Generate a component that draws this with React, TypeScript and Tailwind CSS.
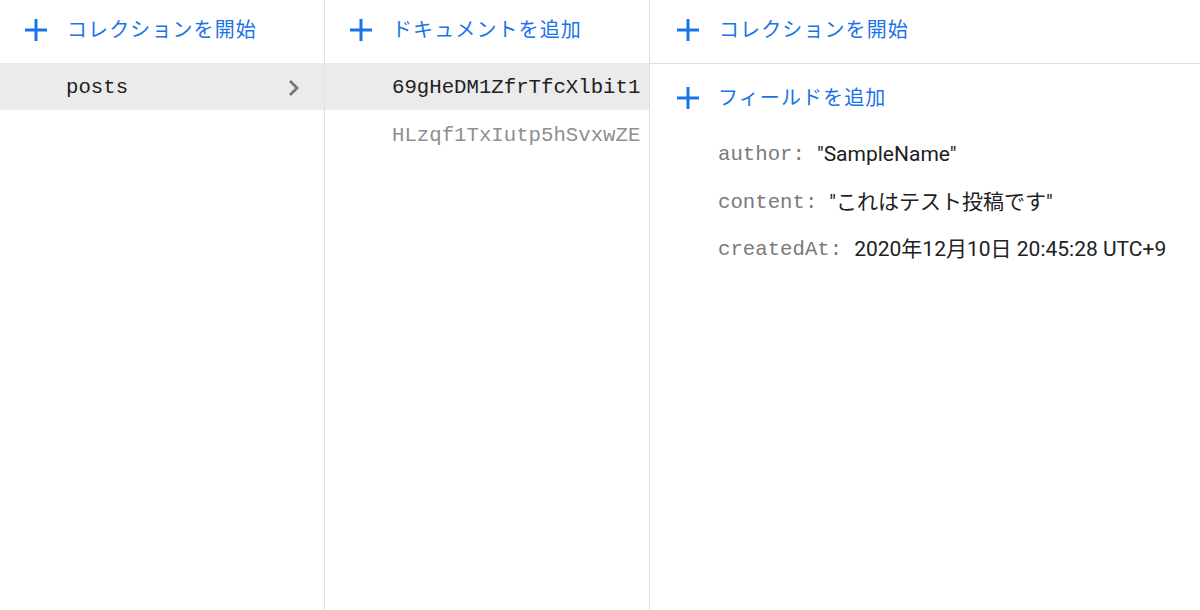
import React from "react";

const sans = { fontFamily: 'Roboto, "Noto Sans CJK JP", sans-serif' } as React.CSSProperties;
const mono = { fontFamily: '"Liberation Mono", "DejaVu Sans Mono", "Noto Sans CJK JP", monospace' } as React.CSSProperties;

function PlusIcon() {
  return (
    <svg width="22" height="22" viewBox="0 0 22 22" className="shrink-0">
      <path d="M9.5 0h3v22h-3z M0 9.5h22v3H0z" fill="#1a73e8" />
    </svg>
  );
}

function Chevron() {
  return (
    <svg width="12" height="18" viewBox="0 0 12 18">
      <path d="M2 2 L9 9 L2 16" fill="none" stroke="#757575" strokeWidth="2.8" />
    </svg>
  );
}

function AddButton({ label, pl }: { label: string; pl: string }) {
  return (
    <div className={`flex h-[59px] items-center ${pl}`}>
      <PlusIcon />
      <span
        className="ml-[20px] text-[20px] tracking-[1.1px] text-[#1a73e8]"
        style={sans}
      >
        {label}
      </span>
    </div>
  );
}

export default function App() {
  return (
    <div className="flex h-[610px] w-[1200px] overflow-hidden bg-white" style={sans}>
      {/* Column 1 */}
      <div className="flex w-[325px] shrink-0 flex-col border-r border-[#e0e0e0]">
        <div className="h-[63px]">
          <AddButton label="コレクションを開始" pl="pl-[25px]" />
        </div>
        <div className="flex h-[47px] items-center justify-between bg-[#ebebeb] pl-[66px] pr-[24px] pt-[2px]">
          <span className="text-[20.7px] text-[#212121]" style={mono}>
            posts
          </span>
          <Chevron />
        </div>
      </div>

      {/* Column 2 */}
      <div className="flex w-[325px] shrink-0 flex-col border-r border-[#e0e0e0]">
        <div className="h-[63px]">
          <AddButton label="ドキュメントを追加" pl="pl-[25px]" />
        </div>
        <div className="flex h-[47px] items-center bg-[#ebebeb] pl-[67px] pt-[2px]">
          <span className="text-[20.7px] text-[#212121]" style={mono}>
            69gHeDM1ZfrTfcXlbit1
          </span>
        </div>
        <div className="flex h-[50px] items-center pl-[67px] pt-[2px]">
          <span className="text-[20.7px] text-[#8f8f8f]" style={mono}>
            HLzqf1TxIutp5hSvxwZE
          </span>
        </div>
      </div>

      {/* Column 3 */}
      <div className="flex flex-1 flex-col">
        <div className="h-[64px] border-b border-[#e0e0e0]">
          <AddButton label="コレクションを開始" pl="pl-[27px]" />
        </div>
        <div className="mt-[10px] flex h-[47px] items-center pl-[27px]">
          <PlusIcon />
          <span className="ml-[19px] text-[20px] tracking-[1.1px] text-[#1a73e8]" style={sans}>
            フィールドを追加
          </span>
        </div>
        <div className="mt-[10px] flex flex-col pl-[68px]">
          {[
            ["author:", '"SampleName"'],
            ["content:", '"これはテスト投稿です"'],
            ["createdAt:", "2020年12月10日 20:45:28 UTC+9"],
          ].map(([k, v]) => (
            <div key={k} className="flex h-[47.5px] items-center">
              <span className="text-[20.7px] text-[#7a7a7a]" style={mono}>
                {k}
              </span>
              <span className="ml-[12px] text-[21px] text-[#212121]" style={sans}>
                {v}
              </span>
            </div>
          ))}
        </div>
      </div>
    </div>
  );
}
